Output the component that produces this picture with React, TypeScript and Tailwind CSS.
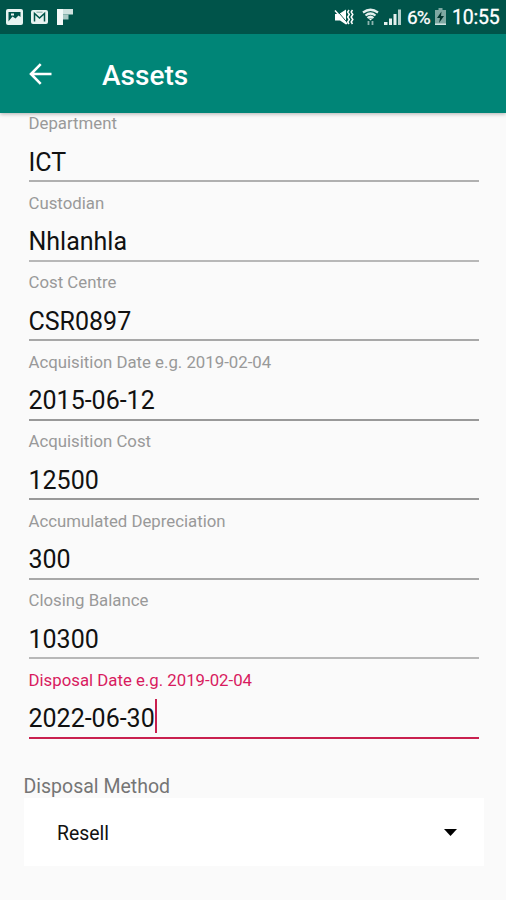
import React, { useState } from 'react';

const initialFields = [
    { id: 'department', label: 'Department', value: 'ICT', line: 'bg-[#b0b0b0]' },
    { id: 'custodian', label: 'Custodian', value: 'Nhlanhla', line: 'bg-[#b8b8b8]' },
    { id: 'costCentre', label: 'Cost Centre', value: 'CSR0897', line: 'bg-[#a8a8a8]' },
    { id: 'acquisitionDate', label: 'Acquisition Date e.g. 2019-02-04', value: '2015-06-12', line: 'bg-[#999999]' },
    { id: 'acquisitionCost', label: 'Acquisition Cost', value: '12500', line: 'bg-[#999999]' },
    { id: 'depreciation', label: 'Accumulated Depreciation', value: '300', line: 'bg-[#a8a8a8]' },
    { id: 'closingBalance', label: 'Closing Balance', value: '10300', line: 'bg-[#b8b8b8]' },
    { id: 'disposalDate', label: 'Disposal Date e.g. 2019-02-04', value: '2022-06-30', line: 'bg-[#b0b0b0]' },
];

const StatusBar = () => (
    <div className="flex h-[34px] items-center bg-[#00544a] pl-[6px] pr-[6px] text-white">
        <svg className="h-[18px] w-[18px]" viewBox="0 0 18 18">
            <rect width="17" height="16" y="1" rx="2" fill="#e8f3f1" />
            <path d="M2.500 13.500V4h12v5l-2-1.500-3 3-3-2z" fill="#00544a" />
            <path d="M2.500 14l3.500-4 3 2.500 3.500-3 2.500 4.500z" fill="#e8f3f1" />
            <path d="M5 5.500h3v2H5z" fill="#e8f3f1" />
        </svg>
        <svg className="ml-[7px] h-[18px] w-[18px]" viewBox="0 0 18 18">
            <rect width="17" height="14" y="2" rx="2" fill="#e8f3f1" />
            <path d="M3.500 13.500V5.500l5 4.500 5-4.500v8" fill="none" stroke="#00544a" strokeWidth="1.500" />
            <path d="M5.500 4.200h6" fill="none" stroke="#7fa8a2" strokeWidth="1" />
        </svg>
        <svg className="ml-[8px] h-[18px] w-[18px]" viewBox="0 0 18 18">
            <path d="M0 1h6v16H0z" fill="#f4faf9" />
            <path d="M6 1h10v5.500H6z" fill="#cfe2df" />
            <path d="M6 6.500h5.500v5H6z" fill="#a9c9c4" />
        </svg>
        <div className="ml-auto flex items-center">
            <svg className="h-[18px] w-[20px]" viewBox="0 0 20 18">
                <path d="M1 6h4l7-4.500v15L6 12.500H1z" fill="#fff" />
                <path d="M2.500 2l11 13" stroke="#00544a" strokeWidth="1" />
                <path d="M1 2.500l12 13.500" stroke="#fff" strokeWidth="1.500" />
                <path d="M15 2l-1.300 2 1.600 2.500-1.600 2.500 1.600 2.500-1.600 2.500 1.300 2M18.500 2l-1.300 2 1.600 2.500-1.600 2.500 1.600 2.500-1.600 2.500 1.300 2" fill="none" stroke="#fff" strokeWidth="1.500" />
            </svg>
            <svg className="ml-[8px] h-[18px] w-[17px]" viewBox="0 0 17 18">
                <path d="M1 4.500q7.500-5.500 15 0M3.500 7.500q5-4 10 0M5.500 10q3-2.500 6 0" fill="none" stroke="#e4f0ee" strokeWidth="2.200" />
                <path d="M6.500 10.500h4l-2 2z" fill="#fff" />
                <path d="M6.500 13v4M10.500 13v4" stroke="#8fb5b0" strokeWidth="1.800" />
            </svg>
            <svg className="ml-[5px] h-[18px] w-[18px]" viewBox="0 0 18 18">
                <path d="M0 14h3.500v3H0zM5 10.500h3v6.500H5zM9.500 6h3v11h-3z" fill="#e4f0ee" />
                <path d="M14 1.500h3V17h-3z" fill="#b4d0cc" />
            </svg>
            <span className="ml-[5px] mt-[1px] w-[25px] text-[19px] leading-[32px] tracking-[-1px] [-webkit-text-stroke:0.3px_white]">6%</span>
            <svg className="ml-[3px] h-[18px] w-[12px]" viewBox="0 0 12 18">
                <path d="M3.500 0h4v2H11v15H0V2h3.500z" fill="#7ea8a2" />
                <path d="M6.500 3.500L2 10h3l-1 5 5-7H6z" fill="#00352e" />
                <path d="M0 15.500h11V17H0z" fill="#d2e5e2" />
            </svg>
            <span className="ml-[5px] mt-[1px] w-[48px] whitespace-nowrap text-[19.5px] leading-[32px] tracking-[-0.2px] [-webkit-text-stroke:0.3px_white]">10:55</span>
        </div>
    </div>
);

const AppBar = () => (
    <header className="relative z-10 bg-[#008577] shadow-[0_1px_4px_rgba(0,0,0,0.3)]">
        <StatusBar />
        <div className="flex h-[79px] items-center pl-[28px]">
            <button aria-label="Back">
                <svg className="h-[24px] w-[24px]" viewBox="0 0 24 24" fill="none" stroke="#fff" strokeWidth="2.600">
                    <path d="M23.500 12H3M12.700 2.200L3 12l9.700 9.800" />
                </svg>
            </button>
            <h1 className="ml-[50px] pt-[4px] text-[28px] leading-[34px] font-medium text-white">Assets</h1>
        </div>
    </header>
);

type FieldProps = {
    label: string;
    value: string;
    line: string;
    focused: boolean;
    onSelect: () => void;
};

const Field = ({ label, value, line, focused, onSelect }: FieldProps) => (
    <div className="flex h-[79.5px] flex-col" onClick={onSelect}>
        <span className={`mt-[10.4px] text-[16.8px] leading-[20px] ${focused ? 'text-[#d81b60]' : 'text-[#999999]'}`}>
            {label}
        </span>
        <div className="mt-[9.6px] flex h-[34px] items-center">
            <span className="pt-[6px] text-[25px] leading-[34px] text-[#111111]">{value}</span>
            {focused && <span className="h-[34px] w-[2px] bg-[#c9204f]" />}
        </div>
        <div className={`mt-auto h-[2px] ${focused ? 'bg-[#c9204f]' : line}`} />
    </div>
);

export default function App() {
    const [focusedId, setFocusedId] = useState('disposalDate');

    return (
        <div className="h-[900px] w-[506px] overflow-hidden bg-[#fafafa] font-['Roboto',sans-serif]">
            <AppBar />
            {/* the form is scrolled a little under the app bar */}
            <main className="-mt-[10.4px]">
                <div className="pl-[28.5px] pr-[27.5px]">
                    {initialFields.map((field) => (
                        <Field
                            key={field.id}
                            label={field.label}
                            value={field.value}
                            line={field.line}
                            focused={field.id === focusedId}
                            onSelect={() => setFocusedId(field.id)}
                        />
                    ))}
                </div>
                <div className="mt-[35.4px] pl-[24px] pr-[22px]">
                    <div className="-ml-[0.5px] h-[24px] pt-[1px] text-[19.5px] leading-[24px] text-[#757575]">Disposal Method</div>
                    <button className="flex h-[68px] w-full items-center justify-between bg-white pl-[33px] pr-[27px]">
                        <span className="pt-[3px] text-[19.4px] text-[#111111]">Resell</span>
                        <svg className="h-[7px] w-[13px]" viewBox="0 0 13 7">
                            <path d="M0 0h13L6.500 7z" fill="#000" />
                        </svg>
                    </button>
                </div>
            </main>
        </div>
    );
}
